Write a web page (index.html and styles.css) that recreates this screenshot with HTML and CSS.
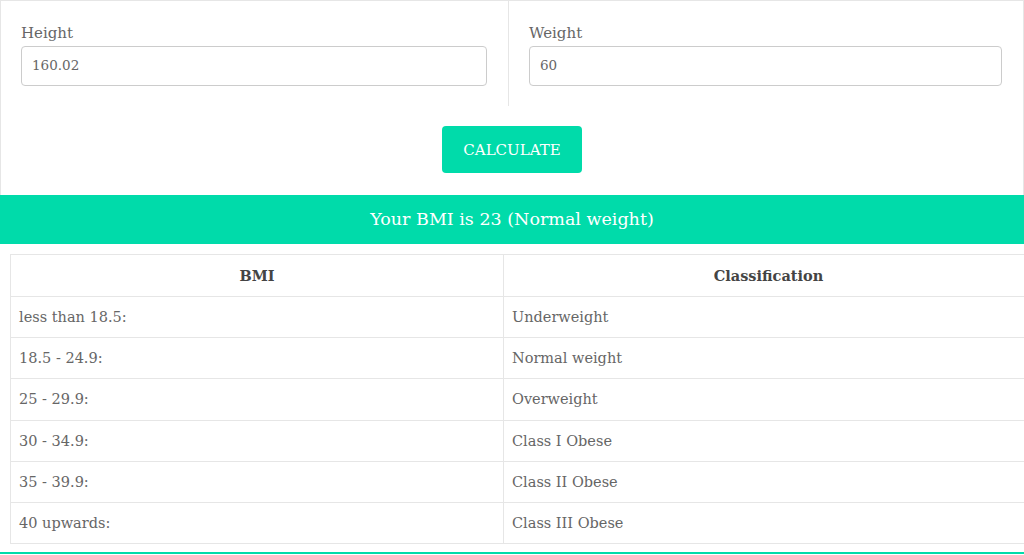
FILE: index.html
```html
<!DOCTYPE html>
<html lang="en">
<head>
    <meta charset="UTF-8">
    <meta name="viewport" content="width=device-width, initial-scale=1.0">
    <title>BMI Calculator</title>
    <link rel="stylesheet" href="styles.css">
</head>
<body>

    <div class="bmi-page">
        <form class="bmi-form" id="bmiForm">
            <div class="form-row">
                <div class="form-col">
                    <label for="height">Height</label>
                    <input type="text" id="height" value="160.02">
                </div>
                <div class="form-col">
                    <label for="weight">Weight</label>
                    <input type="text" id="weight" value="60">
                </div>
            </div>
            <div class="form-actions">
                <button type="submit" class="btn">Calculate</button>
            </div>
        </form>

        <div class="result">Your BMI is 23 (Normal weight)</div>

        <table class="bmi-table">
            <thead>
                <tr>
                    <th class="col-bmi">BMI</th>
                    <th>Classification</th>
                </tr>
            </thead>
            <tbody>
                <tr><td>less than 18.5:</td><td>Underweight</td></tr>
                <tr><td>18.5 - 24.9:</td><td>Normal weight</td></tr>
                <tr><td>25 - 29.9:</td><td>Overweight</td></tr>
                <tr><td>30 - 34.9:</td><td>Class I Obese</td></tr>
                <tr><td>35 - 39.9:</td><td>Class II Obese</td></tr>
                <tr><td>40 upwards:</td><td>Class III Obese</td></tr>
            </tbody>
        </table>
    </div>

</body>
</html>
```

FILE: styles.css
```css
:root {
    --teal: #00dbaa;
    --text: #666;
    --dark: #444;
    --line: #e6e6e6;
}

body {
    margin: 0;
    font-family: "DejaVu Serif", "Liberation Serif", serif;
    color: var(--text);
    background: #fff;
    overflow: hidden;
}

.bmi-page {
    width: 1024px;
    padding-bottom: 8px;
    border-bottom: 2px solid var(--teal);
}

.bmi-form {
    border: 1px solid var(--line);
    border-bottom: none;
    margin: 0;
}

.form-row {
    display: flex;
}

.form-col {
    flex: 1;
    padding: 20px 21px 20px 20px;
    height: 65px;
}

.form-col:first-child {
    flex: 0 0 466px;
    border-right: 1px solid var(--line);
}

label {
    display: block;
    font-size: 15px;
    line-height: 22px;
    margin: 1px 0 2px;
}

input[type="text"] {
    display: block;
    width: 100%;
    height: 40px;
    box-sizing: border-box;
    padding: 0 0 2px 10px;
    border: 1px solid #ccc;
    border-radius: 4px;
    font-family: inherit;
    font-size: 13.5px;
    color: var(--text);
}

.form-actions {
    display: flex;
    justify-content: center;
    padding: 20px 0 22px;
}

.btn {
    width: 140px;
    height: 47px;
    border: none;
    border-radius: 4px;
    background: var(--teal);
    color: #fff;
    font-family: inherit;
    font-size: 15px;
    text-transform: uppercase;
    cursor: pointer;
}

.result {
    background: var(--teal);
    color: #fff;
    text-align: center;
    font-size: 17.5px;
    height: 49px;
    line-height: 49px;
}

.bmi-table {
    margin: 10px 0 0 10px;
    width: 1024px;
    border-collapse: collapse;
    font-size: 14.5px;
}

.bmi-table th,
.bmi-table td {
    border: 1px solid var(--line);
    height: 40.2px;
    padding: 0 8px;
    text-align: left;
}

.bmi-table th {
    height: 41px;
    text-align: center;
    color: var(--dark);
}

.col-bmi {
    width: 476px;
}
```
